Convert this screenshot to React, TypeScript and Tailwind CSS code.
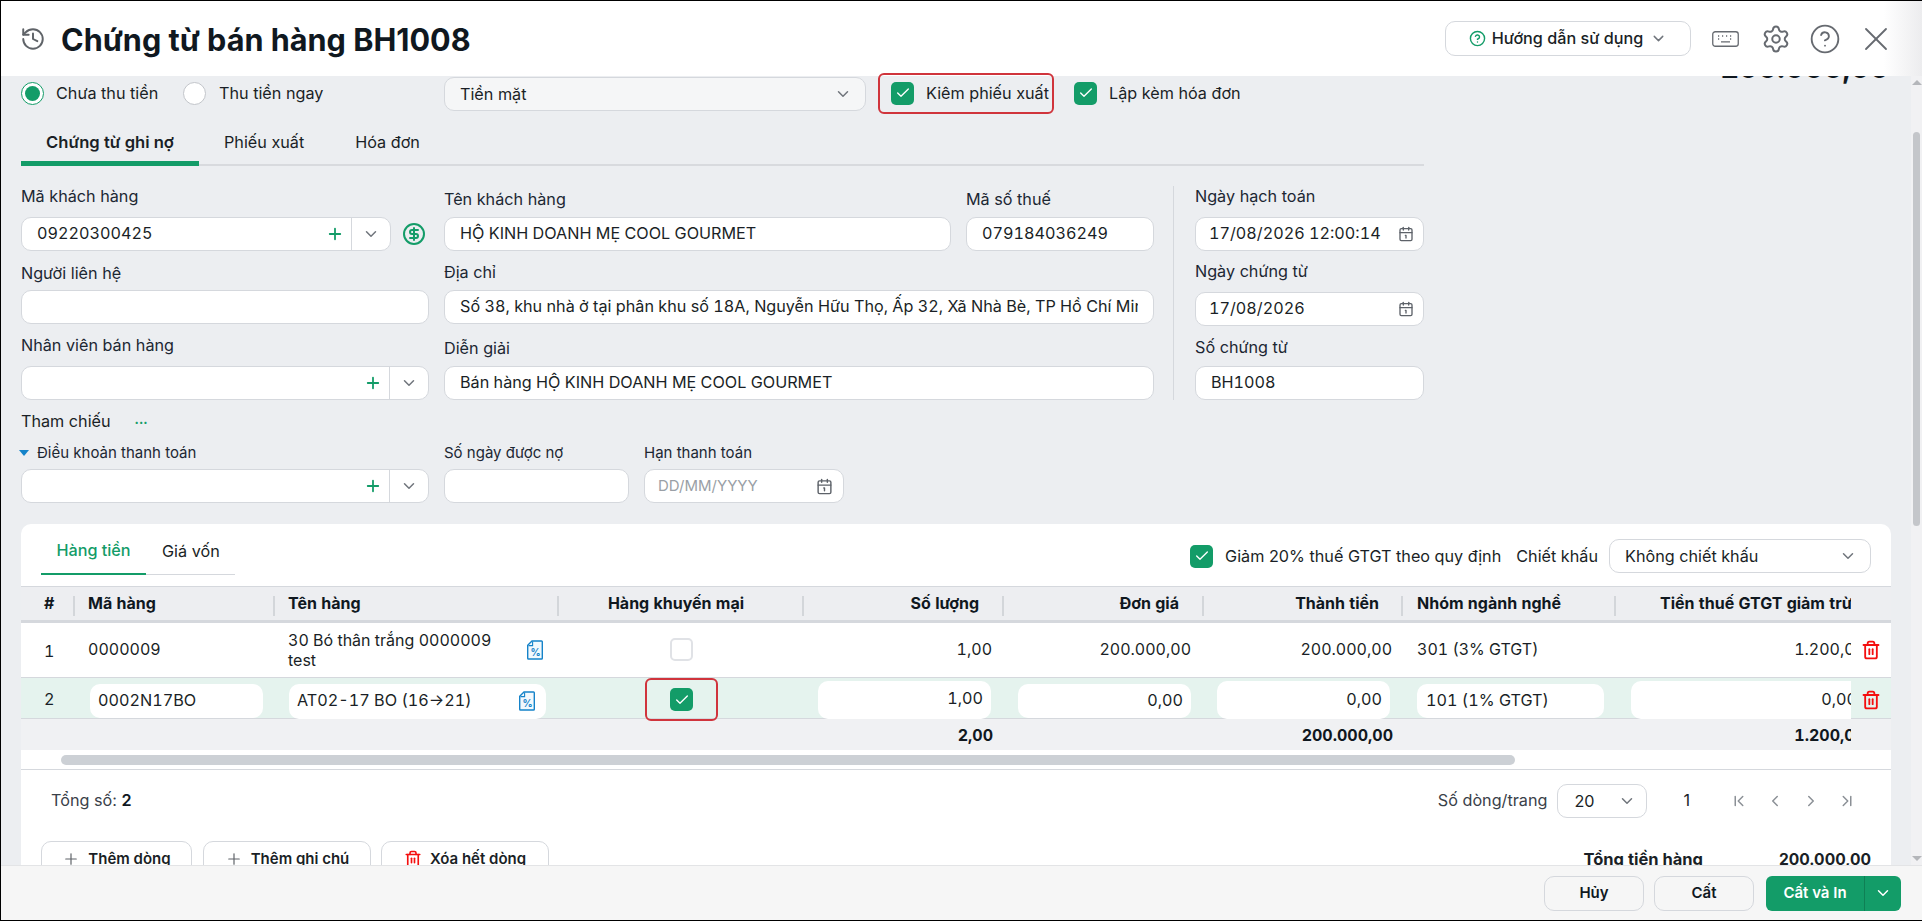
import type { ReactNode } from "react";
import {
  Calendar1,
  Check,
  ChevronDown,
  ChevronFirst,
  ChevronLast,
  ChevronLeft,
  ChevronRight,
  CircleDollarSign,
  CircleHelp,
  History,
  Plus,
  Settings,
  Trash2,
  X,
} from "lucide-react";

const inputBox = "flex h-[34px] items-center rounded-[10px] border border-[#d5d8dd] bg-white";

const CheckBox = ({ checked = true, className = "" }: { checked?: boolean; className?: string }) => (
  <div
    className={
      checked
        ? `flex h-[23px] w-[23px] shrink-0 items-center justify-center rounded-[5px] bg-[#139c68] ${className}`
        : `h-[23px] w-[23px] shrink-0 rounded-[5px] border-2 border-[#e0e2e6] bg-white ${className}`
    }
  >
    {checked && <Check size={16} strokeWidth={2} className="text-white" />}
  </div>
);

const Field = ({ label, labelClass, className = "", children }: { label: string; labelClass: string; className?: string; children: ReactNode }) => (
  <div className={`flex flex-col ${className}`}>
    <div className={`leading-5 text-[#1c2733] ${labelClass}`}>{label}</div>
    {children}
  </div>
);

const TextInput = ({ value = "", className = "" }: { value?: string; className?: string }) => (
  <div className={`${inputBox} px-[15px] whitespace-nowrap ${className}`}>
    <div className="min-w-0 flex-1 overflow-hidden pb-[2px] tabular-nums">{value}</div>
  </div>
);

const ComboInput = ({ value = "", className = "" }: { value?: string; className?: string }) => (
  <div className={`${inputBox} ${className}`}>
    <div className="flex-1 px-[15px] pb-[2px] tabular-nums">{value}</div>
    <Plus size={18} strokeWidth={2.4} className="mr-[7px] text-[#139c68]" />
    <div className="flex h-full w-[39px] items-center justify-center border-l border-[#d5d8dd]">
      <ChevronDown size={18} className="text-[#70757c]" />
    </div>
  </div>
);

const DateInput = ({ value, className = "" }: { value: string; className?: string }) => (
  <div className={`${inputBox} justify-between pr-[9px] pl-[13px] ${className}`}>
    <span className="pb-[2px] whitespace-nowrap tabular-nums">{value}</span>
    <Calendar1 size={16} className="shrink-0 text-[#5d6269]" />
  </div>
);

const PercentFile = () => (
  <svg width="16" height="20" viewBox="0 0 16 20" fill="none" className="shrink-0">
    <path d="M5 1h9.5a.8.8 0 0 1 .8.8v16.4a.8.8 0 0 1-.8.8H1.5a.8.8 0 0 1-.8-.8V5.2z" stroke="#1583c9" strokeWidth="1.4" fill="#f3f9fd" />
    <path d="M1.5 5.6H5.6V1.5" stroke="#1583c9" strokeWidth="1.1" />
    <text x="8.5" y="15.5" textAnchor="middle" fontSize="10" fontWeight="700" fill="#1583c9" fontFamily="Inter">%</text>
  </svg>
);

const KeyboardIcon = () => (
  <svg width="27" height="16" viewBox="0 0 27 16" fill="none" className="mr-[22px] shrink-0" stroke="#666a70">
    <rect x="0.75" y="0.75" width="25.5" height="14.5" rx="2.5" strokeWidth="1.3" />
    <path d="M6 5h1.2M10 5h1.2M14 5h1.2M18 5h1.2M6 8h1.2M18 8h1.2M9 10.8h9" strokeWidth="1.3" />
  </svg>
);

const RowCell = ({ className = "", children }: { className?: string; children?: ReactNode }) => (
  <div className={`flex items-center ${className}`}>{children}</div>
);

const rowGrid = "grid grid-cols-[54px_200px_284px_245px_200px_200px_199px_213px_235px_40px]";

const HeaderCell = ({ label, align = "justify-start", pad = "" }: { label: string; align?: string; pad?: string }) => (
  <div className={`relative flex h-full items-center overflow-hidden pb-[2px] whitespace-nowrap ${align} ${pad}`}>
    {label}
    <span className="absolute top-[9px] right-0 h-[20px] w-[2px] bg-[#d3d6da]" />
  </div>
);

const TrashIcon = ({ size = 20 }: { size?: number }) => <Trash2 size={size} strokeWidth={2.2} className="text-[#f40f0f]" />;

const App = () => {
  return (
    <div className="flex h-[921px] w-[1922px] flex-col overflow-hidden border-t border-b border-l border-black bg-[#eceef1] font-['Inter',sans-serif] text-[16.2px] text-[#1a1f26]">
      {/* title bar */}
      <div className="relative z-10 flex h-[75px] shrink-0 items-center bg-[linear-gradient(to_right,#ffffff_98%,#ececee)] pr-[26px] pl-[19px]">
        <History size={26} strokeWidth={1.8} className="mr-[15px] text-[#5f6368]" />
        <div className="pt-[2px] text-[30.6px] font-bold text-[#10181f]">Chứng từ bán hàng BH1008</div>
        <div className="ml-auto flex items-center">
          <div className="mr-[21px] flex h-[35px] w-[246px] items-center justify-center rounded-[10px] border border-[#d5d8dd] font-medium">
            <CircleHelp size={17} strokeWidth={2} className="mr-[6px] text-[#139c68]" />
            Hướng dẫn sử dụng
            <ChevronDown size={17} className="ml-[7px] text-[#70757c]" />
          </div>
          <KeyboardIcon />
          <Settings size={30} strokeWidth={1.6} className="mr-[18px] text-[#666a70]" />
          <CircleHelp size={32} strokeWidth={1.4} className="mr-[15px] text-[#666a70]" />
          <X size={40} strokeWidth={1.1} className="text-[#666a70]" />
        </div>
      </div>

      {/* scrollable body */}
      <div className="flex min-h-0 flex-1">
        <div className="min-w-0 flex-1 pl-[20px]">
          <div className="flex h-[37px] items-center">
            <div className="mt-[-3px] flex h-[23px] w-[23px] shrink-0 items-center justify-center rounded-full border border-[#139c68] bg-white">
              <div className="h-[15px] w-[15px] rounded-full bg-[#139c68]" />
            </div>
            <span className="mt-[-3px] ml-[12px] w-[102px] whitespace-nowrap">Chưa thu tiền</span>
            <div className="mt-[-3px] ml-[25px] h-[23px] w-[23px] shrink-0 rounded-full border border-[#c2c5ca] bg-white" />
            <span className="mt-[-3px] ml-[13px] w-[103px] whitespace-nowrap">Thu tiền ngay</span>
            <div className="mt-[-1px] ml-[122px] flex h-[34px] w-[422px] items-center justify-between rounded-[10px] border border-[#d5d8dd] bg-[#f5f6f7] pr-[13px] pl-[15px]">
              Tiền mặt
              <ChevronDown size={18} className="text-[#70757c]" />
            </div>
            <div className="relative z-20 mt-[-3px] ml-[12px] flex h-[41px] w-[176px] items-center rounded-[6px] border-2 border-[#d0343c] pl-[11px] whitespace-nowrap">
              <CheckBox />
              <span className="ml-[12px]">Kiêm phiếu xuất</span>
            </div>
            <CheckBox className="mt-[-3px] ml-[20px]" />
            <span className="mt-[-3px] ml-[12px]">Lập kèm hóa đơn</span>
            <div className="mt-[-52px] ml-auto pr-[2px] text-[28.5px] font-bold text-[#10181f]">200.000,00</div>
          </div>

          {/* voucher tabs */}
          <div className="mt-[12px] flex h-[41px] w-[1403px] items-start border-b-2 border-[#d8dade]">
            <div className="flex h-[41px] w-[178px] justify-center border-b-[5px] border-[#139c68] pt-[5px] text-[16.6px] font-semibold">Chứng từ ghi nợ</div>
            <div className="ml-[25px] pt-[5px]">Phiếu xuất</div>
            <div className="ml-[51px] pt-[5px]">Hóa đơn</div>
          </div>

          {/* customer form */}
          <div className="mt-[20px] flex w-[1403px]">
            <div className="w-[423px]">
              <Field label="Mã khách hàng" labelClass="h-[31px]">
                <div className="flex items-center">
                  <ComboInput value="09220300425" className="w-[370px]" />
                  <CircleDollarSign size={24} strokeWidth={2} className="ml-[11px] text-[#139c68]" />
                </div>
              </Field>
              <Field label="Người liên hệ" labelClass="h-[27px]" className="mt-[12px]">
                <TextInput className="w-[408px]" />
              </Field>
              <Field label="Nhân viên bán hàng" labelClass="h-[31px]" className="mt-[11px]">
                <ComboInput className="w-[408px]" />
              </Field>
            </div>
            <div className="w-[730px] border-r border-[#d5d8dd]">
              <div className="flex">
                <Field label="Tên khách hàng" labelClass="h-[28px]" className="mt-[3px] w-[507px]">
                  <TextInput value="HỘ KINH DOANH MẸ COOL GOURMET" />
                </Field>
                <Field label="Mã số thuế" labelClass="h-[28px]" className="mt-[3px] ml-[15px] w-[188px]">
                  <TextInput value="079184036249" />
                </Field>
              </div>
              <Field label="Địa chỉ" labelClass="h-[28px]" className="mt-[11px] w-[710px]">
                <TextInput value="Số 38, khu nhà ở tại phân khu số 18A, Nguyễn Hữu Thọ, Ấp 32, Xã Nhà Bè, TP Hồ Chí Minh" />
              </Field>
              <Field label="Diễn giải" labelClass="h-[28px]" className="mt-[14px] w-[710px]">
                <TextInput value="Bán hàng HỘ KINH DOANH MẸ COOL GOURMET" />
              </Field>
            </div>
            <div className="ml-[21px] w-[229px]">
              <Field label="Ngày hạch toán" labelClass="h-[31px]">
                <DateInput value="17/08/2026 12:00:14" />
              </Field>
              <Field label="Ngày chứng từ" labelClass="h-[31px]" className="mt-[10px]">
                <DateInput value="17/08/2026" />
              </Field>
              <Field label="Số chứng từ" labelClass="h-[29px]" className="mt-[11px]">
                <TextInput value="BH1008" />
              </Field>
            </div>
          </div>

          <div className="mt-[11px] flex h-[20px] items-center leading-5">
            Tham chiếu
            <span className="mt-[-4px] ml-[24px] text-[13px] font-bold text-[#139c68]">...</span>
          </div>

          {/* payment terms */}
          <div className="mt-[10px] flex text-[15px]">
            <Field
              label="Điều khoản thanh toán"
              labelClass="h-[28px] pb-[5px] flex items-center gap-[8px] before:h-0 before:w-0 before:ml-[-2px] before:border-x-[5px] before:border-t-[6px] before:border-x-transparent before:border-t-[#1583c9] before:content-['']"
              className="w-[423px]"
            >
              <ComboInput className="w-[408px]" />
            </Field>
            <Field label="Số ngày được nợ" labelClass="h-[28px] pb-[5px] flex items-center" className="w-[200px]">
              <TextInput className="w-[185px]" />
            </Field>
            <Field label="Hạn thanh toán" labelClass="h-[28px] pb-[5px] flex items-center" className="w-[200px]">
              <div className={`${inputBox} w-[200px] justify-between bg-[#f5f6f7] pr-[10px] pl-[13px] text-[#9a9fa6]`}>
                DD/MM/YYYY
                <Calendar1 size={17} className="text-[#5d6269]" />
              </div>
            </Field>
          </div>

          {/* goods panel */}
          <div className="mt-[21px] w-[1870px] rounded-t-[10px] bg-white">
            <div className="flex h-[62px] items-start justify-between pr-[20px] pl-[20px]">
              <div className="flex h-[51px] w-[194px] border-b border-[#d5d8dd]">
                <div className="flex h-[51px] w-[105px] items-center justify-center border-b-2 border-[#139c68] pt-[4px] font-medium text-[#139c68]">Hàng tiền</div>
                <div className="ml-[16px] flex items-center pt-[4px]">Giá vốn</div>
              </div>
              <div className="mt-[15px] flex items-center">
                <CheckBox />
                <span className="ml-[12px]">Giảm 20% thuế GTGT theo quy định</span>
                <span className="ml-[15px]">Chiết khấu</span>
                <div className={`${inputBox} ml-[11px] w-[262px] justify-between pr-[13px] pl-[15px]`}>
                  Không chiết khấu
                  <ChevronDown size={18} className="text-[#70757c]" />
                </div>
              </div>
            </div>

            {/* goods table */}
            <div className="overflow-hidden tabular-nums">
              <div className={`${rowGrid} h-[37px] border-t border-b-[3px] border-[#d5d8dd] bg-[#edeef1] text-[16px] font-bold text-[#10181f]`}>
                <HeaderCell label="#" pad="pl-[23px]" />
                <HeaderCell label="Mã hàng" pad="pl-[13px]" />
                <HeaderCell label="Tên hàng" pad="pl-[13px]" />
                <HeaderCell label="Hàng khuyến mại" align="justify-center" pad="pr-[11px]" />
                <HeaderCell label="Số lượng" align="justify-end" pad="pr-[25px]" />
                <HeaderCell label="Đơn giá" align="justify-end" pad="pr-[25px]" />
                <HeaderCell label="Thành tiền" align="justify-end" pad="pr-[24px]" />
                <HeaderCell label="Nhóm ngành nghề" pad="pl-[14px]" />
                <div className="flex items-center overflow-hidden pb-[2px] pl-[44px] whitespace-nowrap">
                  <span className="shrink-0">Tiền thuế GTGT giảm trừ</span>
                </div>
                <div />
              </div>

              <div className={`${rowGrid} h-[55px] border-b border-[#d5d8dd] text-[16px]`}>
                <RowCell className="pt-[2px] pl-[23px]">1</RowCell>
                <RowCell className="pb-[3px] pl-[13px]">0000009</RowCell>
                <RowCell className="justify-between pr-[16px] pl-[13px] leading-[20px]">
                  <span className="w-[215px]">30 Bó thân trắng 0000009 test</span>
                  <PercentFile />
                </RowCell>
                <RowCell className="justify-center pb-[2px]"><CheckBox checked={false} /></RowCell>
                <RowCell className="justify-end pr-[12px] pb-[2px]">1,00</RowCell>
                <RowCell className="justify-end pr-[13px] pb-[3px]">200.000,00</RowCell>
                <RowCell className="justify-end pr-[11px] pb-[2px]">200.000,00</RowCell>
                <RowCell className="pb-[3px] pl-[14px]">301 (3% GTGT)</RowCell>
                <RowCell className="justify-end overflow-hidden pb-[2px]"><span className="translate-x-[14px]">1.200,00</span></RowCell>
                <RowCell className="justify-center"><TrashIcon /></RowCell>
              </div>

              <div className={`${rowGrid} h-[41px] border-b border-[#d5d8dd] bg-[#e5f3ee]`}>
                <RowCell className="pl-[23px]">2</RowCell>
                <RowCell className="pt-[3px] pl-[15px]">
                  <div className="flex h-[34px] w-[173px] items-center rounded-[10px] bg-white pb-[2px] pl-[8px]">0002N17BO</div>
                </RowCell>
                <RowCell className="pt-[3px] pl-[14px]">
                  <div className="flex h-[35px] w-[257px] items-center justify-between rounded-[10px] bg-white pr-[11px] pl-[8px]">
                    <span className="pb-[2px]">AT02-17 BO (16→21)</span>
                    <PercentFile />
                  </div>
                </RowCell>
                <RowCell className="justify-center">
                  <div className="flex h-[43px] w-[73px] shrink-0 items-center justify-center rounded-[6px] border-2 border-[#d0343c]"><CheckBox /></div>
                </RowCell>
                <RowCell className="justify-end pr-[13px]">
                  <div className="flex h-[38px] w-[173px] items-center justify-end rounded-[10px] bg-white pr-[8px] pb-[2px]">1,00</div>
                </RowCell>
                <RowCell className="justify-end pt-[3px] pr-[13px]">
                  <div className="flex h-[34px] w-[173px] items-center justify-end rounded-[10px] bg-white pr-[8px] pb-[2px]">0,00</div>
                </RowCell>
                <RowCell className="justify-end pr-[13px]">
                  <div className="flex h-[38px] w-[173px] items-center justify-end rounded-[10px] bg-white pr-[8px] pb-[1px]">0,00</div>
                </RowCell>
                <RowCell className="pt-[3px] pl-[14px]">
                  <div className="flex h-[34px] w-[187px] items-center rounded-[10px] bg-white pb-[2px] pl-[9px]">101 (1% GTGT)</div>
                </RowCell>
                <RowCell className="justify-end overflow-hidden pl-[15px]">
                  <div className="flex h-[38px] w-full items-center justify-end rounded-l-[10px] bg-white pb-[1px]">
                    <span className="translate-x-[6px]">0,00</span>
                  </div>
                </RowCell>
                <RowCell className="justify-center"><TrashIcon /></RowCell>
              </div>

              <div className={`${rowGrid} h-[31px] bg-[#f0f1f3] text-[16px] font-bold text-[#10181f]`}>
                <div /><div /><div /><div />
                <RowCell className="justify-end pr-[11px]">2,00</RowCell>
                <div />
                <RowCell className="justify-end pr-[10px]">200.000,00</RowCell>
                <div />
                <RowCell className="justify-end overflow-hidden"><span className="translate-x-[14px]">1.200,00</span></RowCell>
                <div />
              </div>
            </div>

            {/* horizontal scrollbar */}
            <div className="h-[20px] border-b border-[#d5d8dd] pt-[5px] pl-[40px]">
              <div className="h-[10px] w-[1454px] rounded-[5px] bg-[#ccd0d5]" />
            </div>

            {/* pager */}
            <div className="flex h-[48px] items-center pt-[14px] pr-[35px] pl-[30px]">
              <span className="pb-[2px] text-[#3a4149]">Tổng số: <b className="font-semibold text-[#10181f]">2</b></span>
              <span className="ml-auto pb-[2px] text-[#3a4149]">Số dòng/trang</span>
              <div className={`${inputBox} ml-[10px] w-[90px] justify-between pr-[10px] pl-[16px]`}>
                20
                <ChevronDown size={18} className="text-[#70757c]" />
              </div>
              <span className="ml-[36px] pb-[2px]">1</span>
              <div className="ml-[40px] flex gap-[18px] text-[#8b9096]">
                <ChevronFirst size={18} />
                <ChevronLeft size={18} />
                <ChevronRight size={18} />
                <ChevronLast size={18} />
              </div>
            </div>

            {/* add rows and totals */}
            <div className="mt-[23px] flex pr-[20px] pl-[20px] text-[15px] font-semibold">
              <button className="flex h-[36px] w-[151px] items-center justify-center gap-[8px] rounded-[10px] border border-[#d5d8dd] bg-white">
                <Plus size={18} strokeWidth={1.6} className="text-[#5f6368]" />Thêm dòng
              </button>
              <button className="ml-[11px] flex h-[36px] w-[168px] items-center justify-center gap-[8px] rounded-[10px] border border-[#d5d8dd] bg-white">
                <Plus size={18} strokeWidth={1.6} className="text-[#5f6368]" />Thêm ghi chú
              </button>
              <button className="ml-[10px] flex h-[36px] w-[168px] items-center justify-center gap-[8px] rounded-[10px] border border-[#d5d8dd] bg-white">
                <TrashIcon size={18} />Xóa hết dòng
              </button>
              <span className="ml-auto pt-[6px] text-[16.5px] font-bold">Tổng tiền hàng</span>
              <span className="ml-[76px] pt-[7px] text-[15.6px] font-bold">200.000,00</span>
            </div>
          </div>
        </div>

        {/* page scrollbar */}
        <div className="relative z-0 flex w-[31px] shrink-0 justify-end">
          <div className="flex h-full w-[11px] flex-col items-center bg-[#f1f1f3] pt-[4px]">
            <div className="h-0 w-0 border-x-[5px] border-b-[5px] border-x-transparent border-b-[#b4b6ba]" />
            <div className="mt-[47px] h-[394px] w-[7px] rounded-[4px] bg-[#c4c6ca]" />
            <div className="mt-auto mb-[4px] h-0 w-0 border-x-[5px] border-t-[5px] border-x-transparent border-t-[#b4b6ba]" />
          </div>
        </div>
      </div>

      {/* footer actions */}
      <div className="relative z-10 flex h-[55px] shrink-0 items-center justify-end border-t border-[#e3e4e6] bg-[#f6f6f6] pr-[21px] text-[15px] font-semibold">
        <button className="h-[35px] w-[100px] rounded-[10px] border border-[#d5d8dd] bg-[#f6f6f6] text-[#10181f]">Hủy</button>
        <button className="ml-[10px] h-[35px] w-[100px] rounded-[10px] border border-[#d5d8dd] bg-[#f6f6f6] text-[#10181f]">Cất</button>
        <div className="ml-[12px] flex h-[35px] w-[135px] overflow-hidden rounded-[6px] bg-[#139c68] text-white">
          <button className="w-[99px] border-r border-[#0f8055]">Cất và In</button>
          <button className="flex flex-1 items-center justify-center"><ChevronDown size={18} /></button>
        </div>
      </div>
    </div>
  );
};

export default App;
